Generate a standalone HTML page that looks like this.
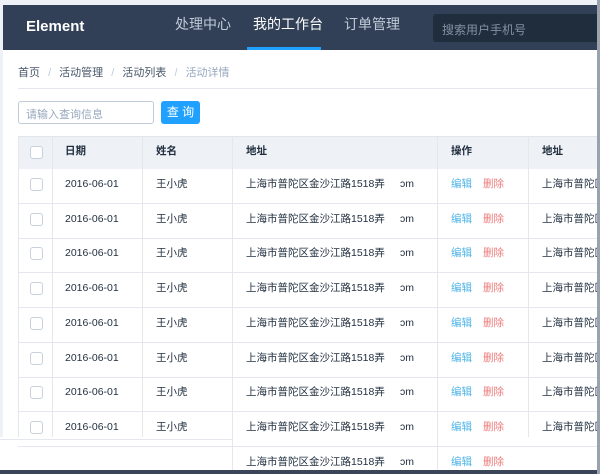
<!DOCTYPE html><html><head><meta charset="utf-8"><style>
*{margin:0;padding:0;box-sizing:border-box}
html,body{width:600px;height:474px;overflow:hidden}
body{background:#eef1f6;position:relative;font-family:"Liberation Sans","Noto Sans CJK SC",sans-serif;font-size:10.5px;color:#1f2d3d}
.a{position:absolute}
.hdr{left:3px;top:5px;width:594px;height:45px;background:#324057}
.nav{color:#bfcbd9;font-size:14px;top:14px}
.cell{position:absolute;height:34.7px;line-height:34.7px;white-space:nowrap;overflow:hidden}
.cb{position:absolute;width:13px;height:13px;border:1px solid #c9d1dc;border-radius:3px;background:#fff}
</style></head><body>
<div class="a" style="left:3px;top:5px;width:594px;height:432px;background:#fff"></div>
<div class="a" style="left:0;top:437px;width:597px;height:33px;background:#fff"></div>
<div class="a" style="left:0;top:439px;width:232px;height:1px;background:#e4e8ee"></div>
<div class="a" style="left:0;top:470px;width:600px;height:4px;background:#3a4658"></div>
<div class="a" style="left:597px;top:0;width:3px;height:474px;background:#9aa3ad"></div>
<div class="a hdr"></div>
<div class="a" style="left:26px;top:18px;color:#fff;font-size:15px;font-weight:bold">Element</div>
<div class="a nav" style="left:175px">处理中心</div>
<div class="a nav" style="left:253px;color:#fff">我的工作台</div>
<div class="a nav" style="left:344px">订单管理</div>
<div class="a" style="left:247px;top:47px;width:74px;height:3px;background:#20a0ff"></div>
<div class="a" style="left:433px;top:14px;width:164px;height:28px;background:#1f2d3d;border-radius:3px 0 0 3px"></div>
<div class="a" style="left:442px;top:21px;color:#8391a5;font-size:12px">搜索用户手机号</div>
<div class="a" style="left:18px;top:64px;color:#48576a;font-size:11px">首页 <span style="color:#bfcbd9;margin:0 5px">/</span> 活动管理 <span style="color:#bfcbd9;margin:0 5px">/</span> 活动列表 <span style="color:#bfcbd9;margin:0 5px">/</span> <span style="color:#97a8be">活动详情</span></div>
<div class="a" style="left:18px;top:88px;width:579px;height:1px;background:#e4e8ee"></div>
<div class="a" style="left:18px;top:101px;width:136px;height:23px;border:1px solid #bfcbd9;border-radius:3px;background:#fff;color:#97a8be;padding:4px 7px;font-size:11px">请输入查询信息</div>
<div class="a" style="left:161px;top:101px;width:39px;height:23px;background:#20a0ff;border-radius:3px;color:#fff;text-align:center;line-height:23px;font-size:12px">查 询</div>
<div class="a" style="left:18px;top:136px;width:579px;height:33px;background:#eef1f6;border-top:1px solid #dfe6ec"></div>
<div id="t"></div>
<script>
var h='';var cols=[18,52,142,232,437,528];
h+='<div class="cb" style="left:30px;top:146px"></div>';
var hd=[[65,'日期'],[156,'姓名'],[246,'地址'],[451,'操作'],[542,'地址']];
hd.forEach(function(c){h+='<div class="cell" style="left:'+c[0]+'px;top:134px;font-weight:bold;color:#1f2d3d">'+c[1]+'</div>'});
for(var i=0;i<9;i++){var y=167+i*34.7;var full=i<8;
 if(full){h+='<div class="cb" style="left:30px;top:'+(y+11)+'px"></div>';
 h+='<div class="cell" style="left:65px;top:'+y+'px">2016-06-01</div>';
 h+='<div class="cell" style="left:156px;top:'+y+'px">王小虎</div>';}
 h+='<div class="cell" style="left:246px;top:'+y+'px;width:145px">上海市普陀区金沙江路1518弄</div>';
 h+='<div class="cell" style="left:400px;top:'+y+'px">ɔm</div>';
 h+='<div class="cell" style="left:451px;top:'+y+'px;color:#4db3e6">编辑</div>';
 h+='<div class="cell" style="left:483px;top:'+y+'px;color:#ee7b7b">删除</div>';
 if(full)h+='<div class="cell" style="left:542px;top:'+y+'px;width:55px">上海市普陀区</div>';
 var lx=full?18:232;
 if(i<8)h+='<div class="a" style="left:'+lx+'px;top:'+(y+36)+'px;width:'+(597-lx)+'px;height:1px;background:#e4e8ee"></div>';
}
cols.forEach(function(x,k){var b=(k>=3&&k<5)?470:437;h+='<div class="a" style="left:'+x+'px;top:136px;width:1px;height:'+(b-136)+'px;background:#e4e8ee"></div>'});
document.getElementById('t').innerHTML=h;
</script>
</body></html>
